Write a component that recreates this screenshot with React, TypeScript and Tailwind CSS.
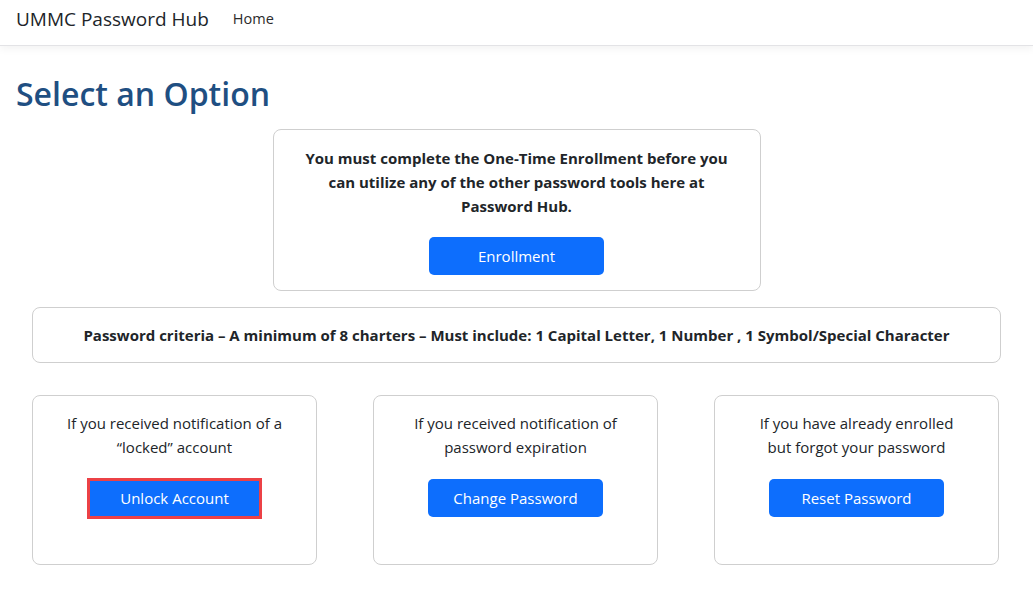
const font = { fontFamily: '"Open Sans", "Liberation Sans", sans-serif' };

function Btn({ label, outlined }: { label: string; outlined?: boolean }) {
  return (
    <div className="flex h-[38px] items-center justify-center">
      <button
        className={
          outlined
            ? 'flex h-[41px] w-[175px] items-center justify-center border-[3px] border-[#ec4146] bg-[#0d6efd] text-[15px] text-white'
            : 'flex h-[38px] w-[175px] items-center justify-center rounded-[5px] bg-[#0d6efd] text-[15px] text-white'
        }
      >
        {label}
      </button>
    </div>
  );
}

function OptionCard({ text, label, outlined }: { text: string[]; label: string; outlined?: boolean }) {
  return (
    <div className="h-[170px] w-[285px] rounded-lg border border-[#cfcfcf] bg-white px-4 pt-[15px] text-center">
      <p className="text-[15px] leading-6 text-[#212529]">
        {text[0]}
        <br />
        {text[1]}
      </p>
      <div className="mt-5">
        <Btn label={label} outlined={outlined} />
      </div>
    </div>
  );
}

export default function App() {
  return (
    <div className="min-h-[593px] bg-white text-[#212529]" style={font}>
      <nav className="flex h-[46px] items-center border-b border-[#e3e3e6] px-4 pb-[7px] shadow-[0_3px_8px_rgba(0,0,0,0.05)]">
        <span className="text-[19px] text-[#212529]">UMMC Password Hub</span>
        <span className="ml-[24px] text-[14.5px] text-[#2b2b2b]">Home</span>
      </nav>

      <main className="px-8">
        <h1 className="-mx-4 mt-[25px] text-[32px] font-semibold leading-[46px] text-[#1f4f82]">Select an Option</h1>

        <div className="mx-auto mt-[12px] w-[488px] rounded-lg border border-[#cfcfcf] px-4 pt-4 pb-[15px] text-center">
          <p className="text-[15px] font-bold leading-6">
            You must complete the One-Time Enrollment before you
            <br />
            can utilize any of the other password tools here at
            <br />
            Password Hub.
          </p>
          <div className="mt-[19px]">
            <Btn label="Enrollment" />
          </div>
        </div>

        <div className="mt-[16px] rounded-lg border border-[#cfcfcf] py-[15px] text-center">
          <p className="text-[15px] font-bold leading-6">
            Password criteria – A minimum of 8 charters – Must include: 1 Capital Letter, 1 Number , 1 Symbol/Special Character
          </p>
        </div>

        <div className="mt-[32px] grid grid-cols-[285px_285px_285px] gap-x-[56px]">
          <OptionCard text={['If you received notification of a', '“locked” account']} label="Unlock Account" outlined />
          <OptionCard text={['If you received notification of', 'password expiration']} label="Change Password" />
          <OptionCard text={['If you have already enrolled', 'but forgot your password']} label="Reset Password" />
        </div>
      </main>
    </div>
  );
}
